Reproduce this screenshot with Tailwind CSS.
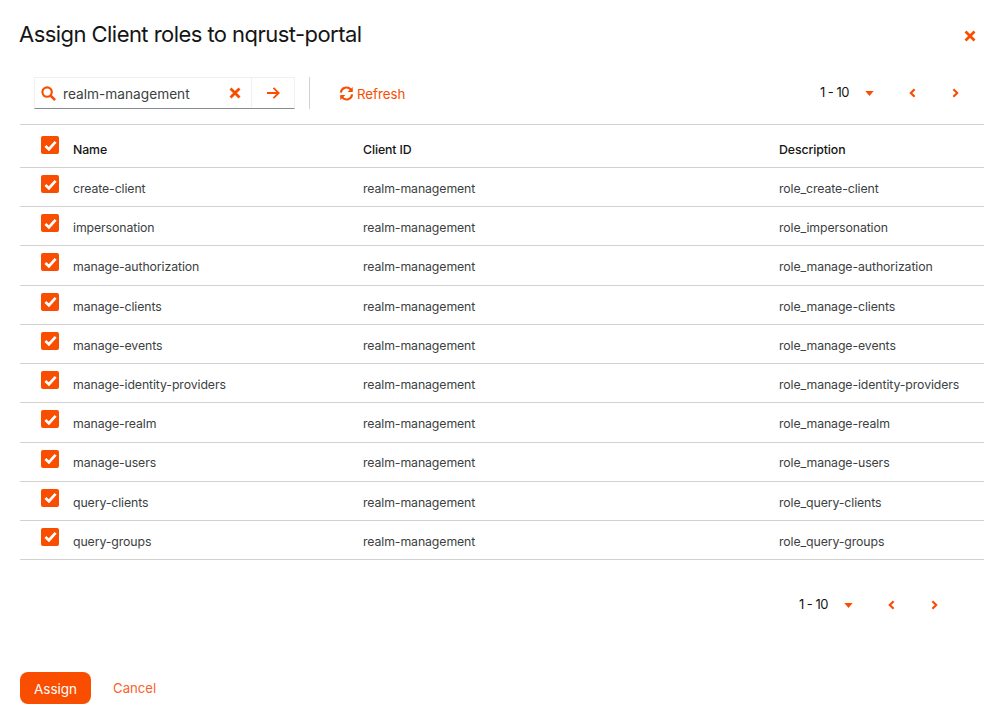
<!DOCTYPE html>
<html lang="en">

<head>
    <meta charset="UTF-8">
    <title>Assign Client roles</title>
    <script src="https://cdn.jsdelivr.net/npm/@tailwindcss/browser@4"></script>
</head>

<body class="bg-white text-[#151515] font-['Inter','Lato',sans-serif] w-[1001px] h-[724px] overflow-hidden">

    <div class="pl-5 pr-[17px] h-[724px] flex flex-col">
        <div class="flex justify-between items-start pt-[20px] h-[77px]">
            <h1 class="text-[22px] leading-[28px] font-normal tracking-[-0.55px] ml-[-1px]">Assign Client roles to nqrust-portal</h1>
            <button class="mt-[10px] mr-[8px] w-[12px] h-[12px] text-[#f94d00]">
                <svg viewBox="0 0 12 12" class="w-3 h-3"><path d="M1.5 1.5l9 9M10.5 1.5l-9 9" stroke="currentColor" stroke-width="2.8" /></svg>
            </button>
        </div>

        <div class="flex items-center h-[32px] pl-[14px]">
            <div class="flex w-[261px] h-[32px] border border-[#f0f0f0] border-b-[#8a8d90]">
                <div class="flex flex-1 items-center pl-[6px] pr-[10px]">
                    <svg viewBox="0 0 16 16" class="w-[15px] h-[15px] text-[#f94d00]" fill="none" stroke="currentColor" stroke-width="2.3"><circle cx="6.5" cy="6.5" r="5" /><path d="M10.3 10.3L15 15" stroke-width="2.8" /></svg>
                    <span class="ml-[7px] flex-1 pt-[2px] text-[13.7px] text-[#3c3f42]">realm-management</span>
                    <svg viewBox="0 0 12 12" class="w-[12px] h-[12px] text-[#f94d00]"><path d="M1.5 1.5l9 9M10.5 1.5l-9 9" stroke="currentColor" stroke-width="2.8" /></svg>
                </div>
                <div class="w-[43px] border-l border-[#f0f0f0] flex items-center justify-center text-[#f94d00]">
                    <svg viewBox="0 0 14 14" class="w-[14px] h-[14px]" fill="none" stroke="currentColor" stroke-width="1.8"><path d="M1 7h11.5M7.5 1.8L12.7 7l-5.2 5.2" /></svg>
                </div>
            </div>
            <div class="ml-[14px] w-px h-[32px] bg-[#d2d2d2]"></div>
            <div class="ml-[29px] flex items-center text-[#f94d00] text-[13.3px] gap-[3px]">
                <svg viewBox="0 0 16 16" class="w-[15px] h-[15px]" fill="none" stroke="currentColor" stroke-width="2.2"><path d="M2 7a6 6 0 0 1 10.6-3.2L14 5.5" /><path d="M14 9a6 6 0 0 1-10.6 3.2L2 10.5" /><path d="M14.6 1v5.4H9.2M1.4 15V9.6h5.4" fill="currentColor" stroke="none" /></svg>
                <span class="pt-[3px]">Refresh</span>
            </div>
            <div class="ml-auto flex items-center text-[#f94d00]">
                <span class="text-[13px] tracking-[-0.5px] text-[#151515]">1 - 10</span>
                <svg viewBox="0 0 10 6" class="ml-[16px] w-[9px] h-[5px]"><path d="M0 0h10L5 6z" fill="currentColor" /></svg>
                <svg viewBox="0 0 8 12" class="ml-[35px] w-[7px] h-[10px]" fill="none" stroke="currentColor" stroke-width="2.6"><path d="M6.5 1.5L2 6l4.5 4.5" /></svg>
                <svg viewBox="0 0 8 12" class="ml-[36px] mr-[25px] w-[7px] h-[10px]" fill="none" stroke="currentColor" stroke-width="2.6"><path d="M1.5 1.5L6 6l-4.5 4.5" /></svg>
            </div>
        </div>

        <table class="mt-[15px] w-full table-fixed border-t border-[#d2d2d2] text-[12.3px] tracking-[-0.1px] text-[#3c3f42]">
            <thead>
                <tr class="h-[43px] border-b border-[#d2d2d2] text-[#151515]">
                    <th class="w-[53px] p-0 pl-[21px] text-left align-top pt-[11px]">
                        <span class="flex w-[18px] h-[18px] rounded-[2px] bg-[#f94d00] items-center justify-center">
                            <svg viewBox="0 0 14 14" class="w-[13px] h-[13px]" fill="none" stroke="white" stroke-width="2.9"><path d="M1.5 7.5L5.3 11 12.5 3" /></svg>
                        </span>
                    </th>
                    <th class="w-[290px] p-0 text-left font-medium pt-[8px]">Name</th>
                    <th class="w-[416px] p-0 text-left font-medium pt-[8px]">Client ID</th>
                    <th class="p-0 text-left font-medium pt-[8px]">Description</th>
                </tr>
            </thead>
            <tbody id="roles"></tbody>
        </table>

        <div class="flex items-center justify-end mt-[37px] h-[16px] text-[#f94d00]">
            <span class="text-[13px] tracking-[-0.5px] text-[#151515]">1 - 10</span>
            <svg viewBox="0 0 10 6" class="ml-[16px] w-[9px] h-[5px]"><path d="M0 0h10L5 6z" fill="currentColor" /></svg>
            <svg viewBox="0 0 8 12" class="ml-[35px] w-[7px] h-[10px]" fill="none" stroke="currentColor" stroke-width="2.6"><path d="M6.5 1.5L2 6l4.5 4.5" /></svg>
            <svg viewBox="0 0 8 12" class="ml-[36px] mr-[46px] w-[7px] h-[10px]" fill="none" stroke="currentColor" stroke-width="2.6"><path d="M1.5 1.5L6 6l-4.5 4.5" /></svg>
        </div>

        <div class="flex items-center mt-[59px]">
            <button class="w-[71px] h-[32px] pt-[2px] rounded-[8px] bg-[#f94d00] text-white text-[13.5px]">Assign</button>
            <button class="ml-[22px] pt-[2px] text-[13.2px] text-[#f9622a]">Cancel</button>
        </div>
    </div>

    <script>
        const roles = ["create-client", "impersonation", "manage-authorization", "manage-clients", "manage-events",
            "manage-identity-providers", "manage-realm", "manage-users", "query-clients", "query-groups"];

        document.getElementById("roles").innerHTML = roles.map(role => `
            <tr class="h-[39.23px] border-b border-[#d2d2d2]">
                <td class="p-0 pl-[21px] align-top pt-[7px]">
                    <span class="flex w-[18px] h-[18px] rounded-[2px] bg-[#f94d00] items-center justify-center">
                        <svg viewBox="0 0 14 14" class="w-[13px] h-[13px]" fill="none" stroke="white" stroke-width="2.9"><path d="M1.5 7.5L5.3 11 12.5 3" /></svg>
                    </span>
                </td>
                <td class="p-0 pt-[4px]">${role}</td>
                <td class="p-0 pt-[4px]">realm-management</td>
                <td class="p-0 pt-[4px]">role_${role}</td>
            </tr>`).join("");
    </script>

</body>

</html>
